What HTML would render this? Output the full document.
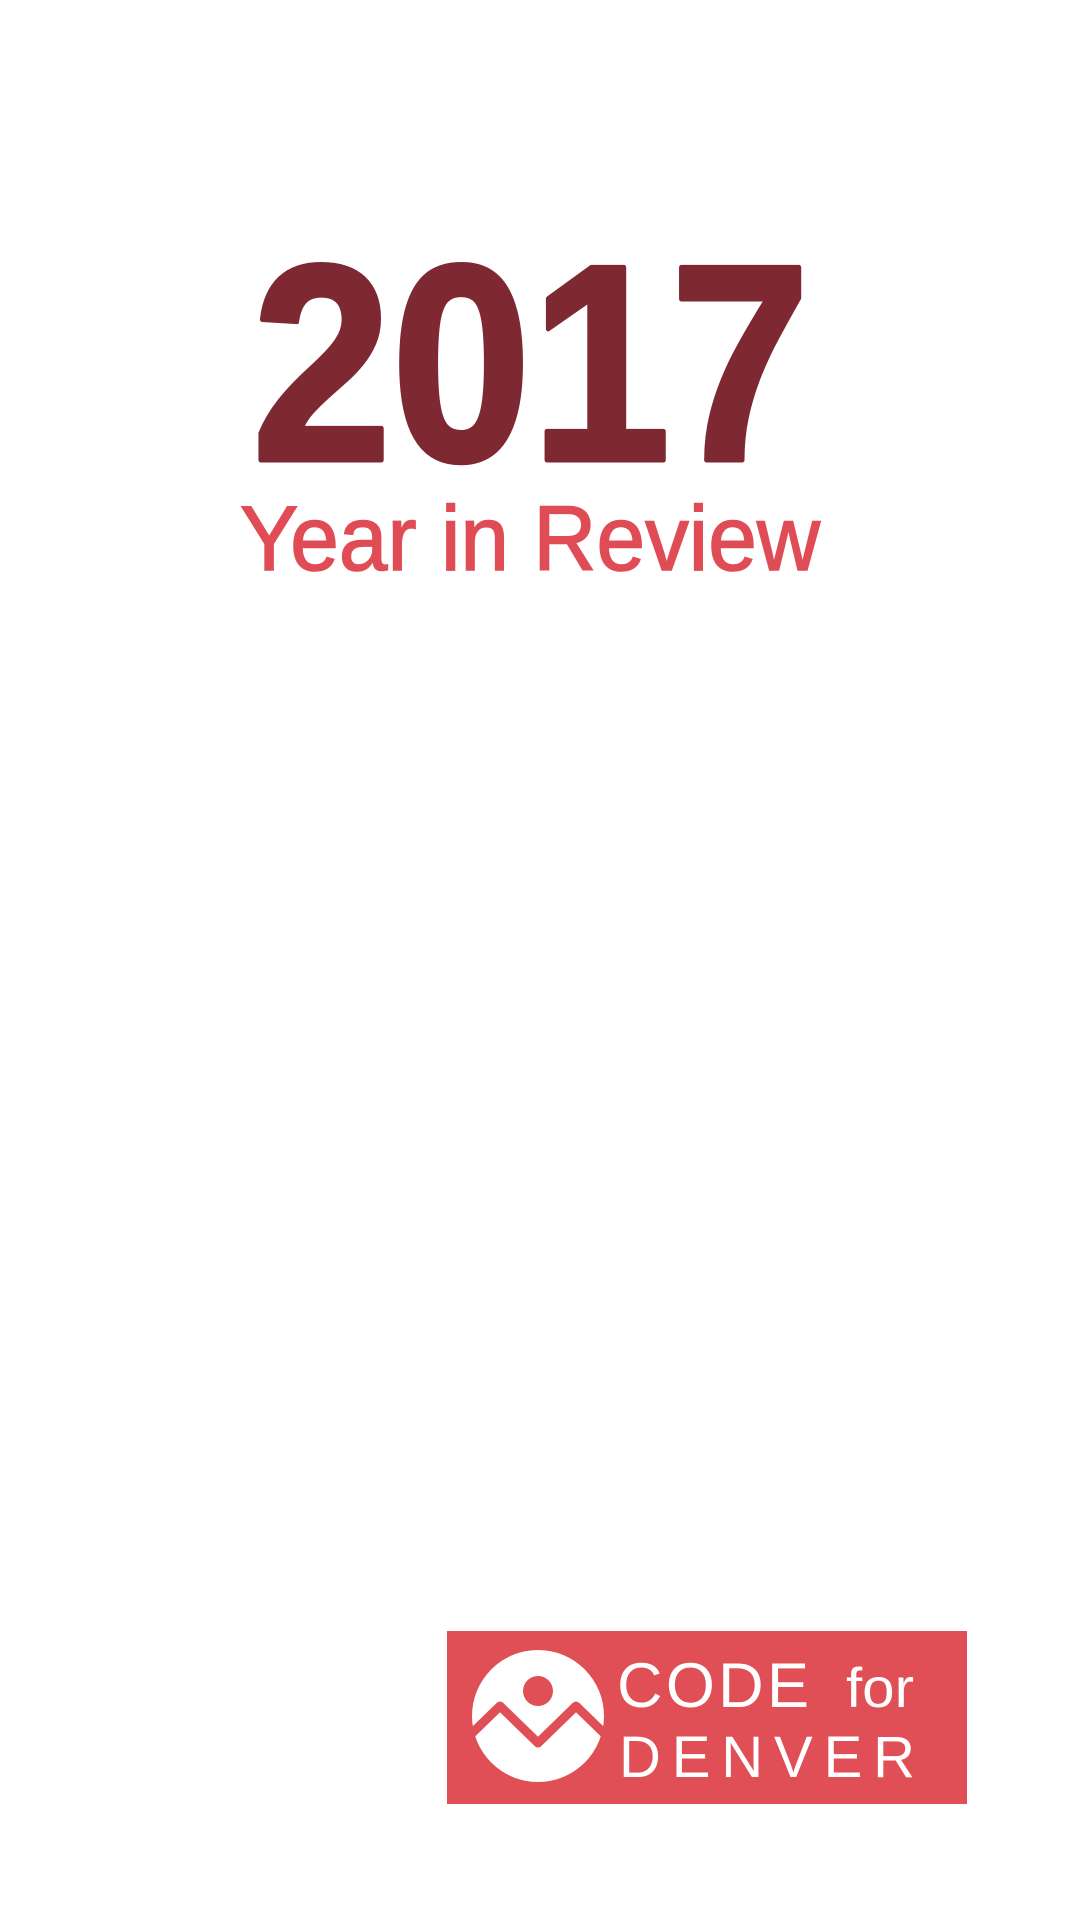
<!DOCTYPE html>
<html><head><meta charset="utf-8"><style>
html,body{margin:0;padding:0;background:#fff;width:1080px;height:1920px;overflow:hidden}
svg{display:block}
</style></head><body>
<svg width="1080" height="1920" viewBox="0 0 1080 1920" xmlns="http://www.w3.org/2000/svg">
<text x="252" y="460" font-family="Liberation Sans, sans-serif" font-weight="bold" font-size="280" fill="#7e2832" stroke="#7e2832" stroke-width="5" stroke-linejoin="round" textLength="558" lengthAdjust="spacingAndGlyphs">2017</text>
<text x="240" y="570" font-family="Liberation Sans, sans-serif" font-size="92" fill="#e04c55" stroke="#e04c55" stroke-width="1.5" textLength="580" lengthAdjust="spacingAndGlyphs">Year in Review</text>
<rect x="447" y="1631" width="520" height="173" fill="#e04f56"/>
<circle cx="538" cy="1716" r="66" fill="#fff"/>
<circle cx="538" cy="1691" r="15" fill="#e04f56"/>
<polyline points="466,1739 500,1706 538,1743 576,1706 610,1739" fill="none" stroke="#e04f56" stroke-width="9" stroke-linejoin="round"/>
<text x="617" y="1707" font-family="Liberation Sans, sans-serif" font-size="63" fill="#fff" textLength="192" lengthAdjust="spacing">CODE</text>
<text x="846" y="1707" font-family="Liberation Sans, sans-serif" font-size="56" fill="#fff" textLength="68" lengthAdjust="spacingAndGlyphs">for</text>
<text x="619" y="1777" font-family="Liberation Sans, sans-serif" font-size="58" fill="#fff" textLength="296" lengthAdjust="spacing">DENVER</text>
</svg>
</body></html>
